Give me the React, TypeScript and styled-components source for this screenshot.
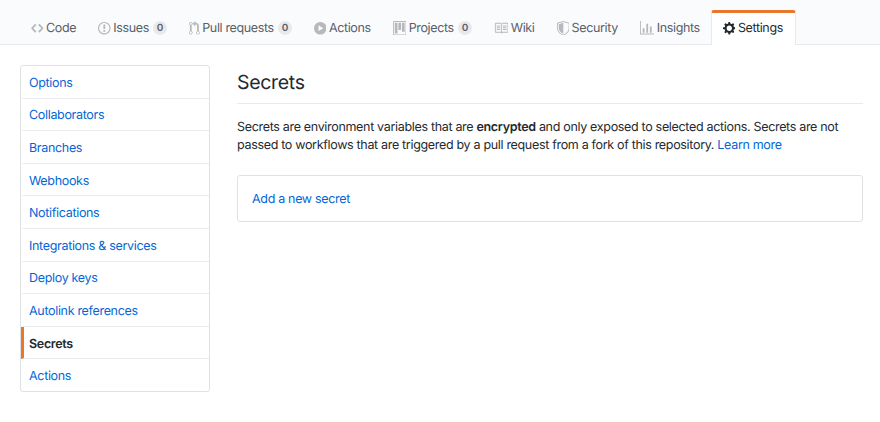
import React from "react";
import styled, { createGlobalStyle } from "styled-components";

const GlobalStyle = createGlobalStyle`
  html, body {
    margin: 0;
    padding: 0;
    background: #fff;
    font-family: Inter, "Liberation Sans", sans-serif;
    color: #24292e;
    text-rendering: geometricPrecision;
    letter-spacing: -0.32px;
  }
  * { box-sizing: border-box; }
`;

const ICONS: Record<string, { w: number; d: string }> = {
  code: { w: 14, d: "M9.5 3L8 4.5 11.5 8 8 11.5 9.5 13 14 8 9.5 3zm-5 0L0 8l4.5 5L6 11.5 2.5 8 6 4.5 4.5 3z" },
  issue: { w: 14, d: "M7 2.3c3.14 0 5.7 2.56 5.7 5.7s-2.56 5.7-5.7 5.7A5.71 5.71 0 011.3 8c0-3.14 2.56-5.7 5.7-5.7zM7 1C3.14 1 0 4.14 0 8s3.14 7 7 7 7-3.14 7-7-3.14-7-7-7zm1 3H6v5h2V4zm0 6H6v2h2v-2z" },
  pull: { w: 12, d: "M11 11.28V5c-.03-.78-.34-1.47-.94-2.06C9.46 2.35 8.78 2.03 8 2H7V0L4 3l3 3V4h1c.27.02.48.11.69.31.21.2.3.42.31.69v6.28A1.993 1.993 0 0010 15a1.993 1.993 0 001-3.72zm-1 2.92c-.66 0-1.2-.55-1.2-1.2 0-.65.55-1.2 1.2-1.2.65 0 1.2.55 1.2 1.2 0 .65-.55 1.2-1.2 1.2zM4 3c0-1.11-.89-2-2-2a1.993 1.993 0 00-1 3.72v6.56A1.993 1.993 0 002 15a1.993 1.993 0 001-3.72V4.72c.59-.34 1-.98 1-1.72zm-.8 10c0 .66-.55 1.2-1.2 1.2-.65 0-1.2-.55-1.2-1.2 0-.65.55-1.2 1.2-1.2.65 0 1.2.55 1.2 1.2zM2 4.2C1.34 4.2.8 3.65.8 3c0-.65.55-1.2 1.2-1.2.65 0 1.2.55 1.2 1.2 0 .65-.55 1.2-1.2 1.2z" },
  play: { w: 14, d: "M7 1a7 7 0 100 14A7 7 0 007 1zM5 4.8v6.4L10.4 8 5 4.8z" },
  project: { w: 15, d: "M10 12h3V2h-3v10zm-4-2h3V2H6v8zm-4 4h3V2H2v12zm-1 1h13V1H1v14zM14 0H1a1 1 0 00-1 1v14a1 1 0 001 1h13a1 1 0 001-1V1a1 1 0 00-1-1z" },
  book: { w: 16, d: "M3 5h4v1H3V5zm0 3h4V7H3v1zm0 2h4V9H3v1zm11-5h-4v1h4V5zm0 2h-4v1h4V7zm0 2h-4v1h4V9zm2-6v9c0 .55-.45 1-1 1H9.5l-1 1-1-1H2c-.55 0-1-.45-1-1V3c0-.55.45-1 1-1h5.5l1 1 1-1H15c.55 0 1 .45 1 1zm-8 .5L7.5 3H2v9h6V3.5zm7-.5H9.5l-.5.5V12h6V3z" },
  shield: { w: 14, d: "M0 2l7-2 7 2v6.02C14 12.69 8.69 16 7 16c-1.69 0-7-3.31-7-7.98V2zm1 .75L7 1l6 1.75v5.27C13 12.1 8.45 15 7 15c-1.45 0-6-2.9-6-6.98V2.75zm1 .75L7 2v12c-1.2 0-5-2.41-5-5.82V3.5z" },
  graph: { w: 16, d: "M16 14v1H0V0h1v14h15zM5 13H3V8h2v5zm4 0H7V3h2v10zm4 0h-2V6h2v7z" },
  gear: { w: 14, d: "M14 8.77v-1.6l-1.94-.64-.45-1.09.88-1.84-1.13-1.13-1.81.91-1.09-.45-.69-1.92h-1.6l-.63 1.94-1.11.45-1.84-.88-1.13 1.13.91 1.81-.45 1.09L0 7.23v1.59l1.94.64.45 1.09-.88 1.84 1.13 1.13 1.81-.91 1.09.45.69 1.92h1.59l.63-1.94 1.11-.45 1.84.88 1.13-1.13-.92-1.81.47-1.09L14 8.75v.02zM7 11c-1.66 0-3-1.34-3-3s1.34-3 3-3 3 1.34 3 3-1.34 3-3 3z" },
};

const TABS = [
  { icon: "code", label: "Code" },
  { icon: "issue", label: "Issues", count: 0 },
  { icon: "pull", label: "Pull requests", count: 0 },
  { icon: "play", label: "Actions" },
  { icon: "project", label: "Projects", count: 0 },
  { icon: "book", label: "Wiki" },
  { icon: "shield", label: "Security" },
  { icon: "graph", label: "Insights" },
  { icon: "gear", label: "Settings", selected: true },
];

const MENU = [
  "Options",
  "Collaborators",
  "Branches",
  "Webhooks",
  "Notifications",
  "Integrations & services",
  "Deploy keys",
  "Autolink references",
  "Secrets",
  "Actions",
];

const Icon: React.FC<{ name: string }> = ({ name }) => {
  const icon = ICONS[name];
  return (
    <TabIcon width={icon.w} height={16} viewBox={`0 0 ${icon.w} 16`} fill="currentColor" fillRule="evenodd">
      <path d={icon.d} />
    </TabIcon>
  );
};

export default function App() {
  return (
    <>
      <GlobalStyle />
      <TabBar>
        {TABS.map((tab) => (
          <Tab key={tab.label} $selected={tab.selected}>
            <Icon name={tab.icon} />
            {tab.label}
            {tab.count !== undefined && <Counter>{tab.count}</Counter>}
          </Tab>
        ))}
      </TabBar>
      <Page>
        <Menu>
          {MENU.map((item) => (
            <MenuItem key={item} $selected={item === "Secrets"}>
              {item}
            </MenuItem>
          ))}
        </Menu>
        <Content>
          <Heading>Secrets</Heading>
          <Description>
            Secrets are environment variables that are <strong>encrypted</strong> and only exposed to selected actions. Secrets are not
            passed to workflows that are triggered by a pull request from a fork of this repository. <Link>Learn more</Link>
          </Description>
          <AddBox>
            <Link>Add a new secret</Link>
          </AddBox>
        </Content>
      </Page>
    </>
  );
}

const TabBar = styled.nav`
  display: flex;
  align-items: flex-end;
  height: 45px;
  padding: 10px 0 0 20px;
  background: #fafbfc;
  border-bottom: 1px solid #e8eaed;
`;

const Tab = styled.a<{ $selected?: boolean }>`
  display: flex;
  align-items: center;
  height: ${(props) => (props.$selected ? "35px" : "34px")};
  padding: ${(props) => (props.$selected ? "0 12.5px 2px 11px" : "2px 11px 0")};
  font-size: 12.5px;
  letter-spacing: -0.36px;
  white-space: nowrap;
  color: ${(props) => (props.$selected ? "#24292e" : "#586069")};
  margin-bottom: ${(props) => (props.$selected ? "-1px" : "0")};
  ${(props) =>
    props.$selected &&
    `
    background: #fff;
    border: 1px solid #e8eaed;
    border-top: 3px solid #e8762d;
    border-bottom: 0;
    border-radius: 3px 3px 0 0;
    svg { color: #24292e; }
  `}
`;

const TabIcon = styled.svg`
  flex: none;
  height: 14.4px;
  width: auto;
  margin-right: 2.5px;
  color: rgba(27, 31, 35, 0.3);
`;

const Counter = styled.span`
  display: inline-block;
  min-width: 14px;
  height: 14px;
  margin-left: 4px;
  border-radius: 7px;
  background: rgba(27, 31, 35, 0.08);
  color: #586069;
  font-size: 10px;
  font-weight: 600;
  line-height: 14px;
  text-align: center;
`;

const Page = styled.div`
  display: flex;
  align-items: flex-start;
  gap: 27px;
  padding: 20px 17px 0 20px;
`;

const Menu = styled.div`
  flex: none;
  width: 190px;
  height: 327px;
  display: flex;
  flex-direction: column;
  background: #fff;
  border: 1px solid #dfe2e5;
  border-radius: 3px;
  overflow: hidden;
`;

const MenuItem = styled.a<{ $selected?: boolean }>`
  flex: 1;
  display: flex;
  align-items: center;
  padding: 3px 0 0 5px;
  font-size: 12.5px;
  color: ${(props) => (props.$selected ? "#24292e" : "#0366d6")};
  font-weight: ${(props) => (props.$selected ? 600 : 400)};
  border-left: 3px solid ${(props) => (props.$selected ? "#e8762d" : "transparent")};
  border-bottom: 1px solid #e8eaed;
  &:last-child {
    border-bottom: 0;
  }
`;

const Content = styled.main`
  flex: 1;
  min-width: 0;
`;

const Heading = styled.h2`
  margin: 0;
  height: 39px;
  font-size: 19.5px;
  font-weight: 400;
  line-height: 34px;
  border-bottom: 1px solid #e8eaed;
`;

const Description = styled.p`
  margin: 15px 0 20px;
  font-size: 12.5px;
  line-height: 18px;
  strong {
    font-weight: 600;
  }
`;

const Link = styled.a`
  color: #0366d6;
`;

const AddBox = styled.div`
  display: flex;
  align-items: center;
  height: 47px;
  padding: 2px 0 0 14px;
  font-size: 12.5px;
  border: 1px solid #dfe2e5;
  border-radius: 3px;
`;
